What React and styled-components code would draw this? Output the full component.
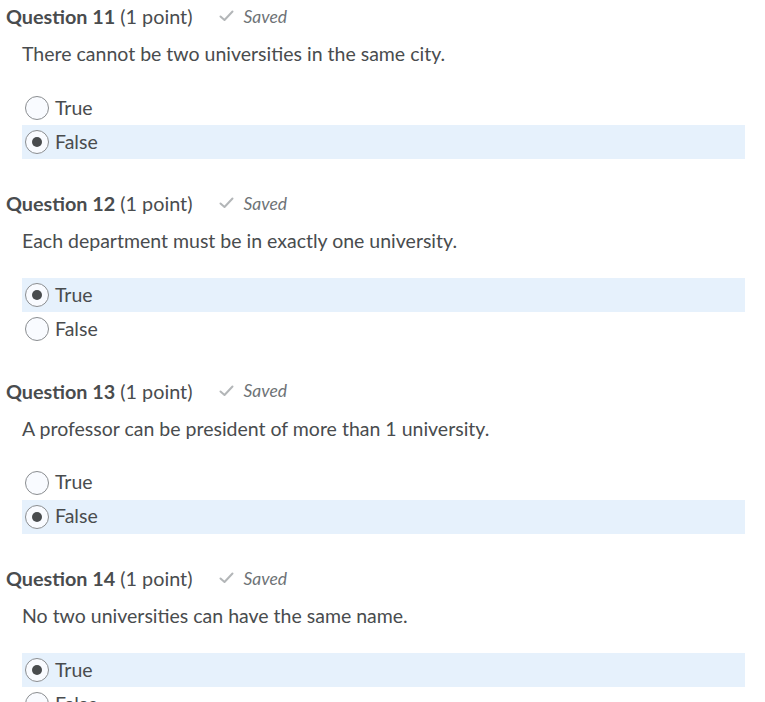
import React from 'react';
import styled, { createGlobalStyle } from 'styled-components';

const GlobalStyle = createGlobalStyle`
    body {
        margin: 0;
        background: #fff;
        font-family: Lato, "Noto Sans", sans-serif;
        color: #494c4e;
    }
`;

const Page = styled.div`
    padding: 4px 20px 0 6px;
`;

const Question = styled.section`
    margin-bottom: 32.35px;
`;

const TitleRow = styled.div`
    display: flex;
    align-items: center;
    height: 24px;
    font-size: 19.8px;
`;

const Number = styled.span`
    font-weight: 700;
`;

const Points = styled.span`
    margin-left: 5px;
`;

const Saved = styled.span`
    display: flex;
    align-items: center;
    margin-left: 27px;
    font-size: 17.5px;
    font-style: italic;
    color: #6e7376;
    svg {
        margin-right: 9px;
    }
`;

const Prompt = styled.p`
    margin: 14px 0 25px 16px;
    font-size: 19.5px;
    line-height: 24px;
`;

const Options = styled.div`
    margin-left: 16px;
`;

const Option = styled.label`
    box-sizing: border-box;
    display: flex;
    align-items: center;
    height: 34px;
    padding: 0 0 2px 3px;
    font-size: 19.5px;
    background: ${(p) => (p.checked ? '#e6f1fc' : 'transparent')};
`;

const Radio = styled.span`
    box-sizing: border-box;
    width: 24px;
    height: 24px;
    margin: 2px 6px 0 0;
    border-radius: 50%;
    border: 1px solid #8a8d90;
    background: #f9fbff;
    display: flex;
    align-items: center;
    justify-content: center;
    &::after {
        content: '';
        display: ${(p) => (p.checked ? 'block' : 'none')};
        width: 10px;
        height: 10px;
        border-radius: 50%;
        background: #494c4e;
    }
`;

const Check = () => (
    <svg width="15" height="12" viewBox="0 0 15 12">
        <path d="M1.5 6.5 L5.5 10 L13.5 1.5" fill="none" stroke="#b3b6b8" strokeWidth="2" strokeLinecap="round" strokeLinejoin="round" />
    </svg>
);

const questions = [
    { n: 11, text: 'There cannot be two universities in the same city.', answer: 'False' },
    { n: 12, text: 'Each department must be in exactly one university.', answer: 'True' },
    { n: 13, text: 'A professor can be president of more than 1 university.', answer: 'False' },
    { n: 14, text: 'No two universities can have the same name.', answer: 'True' },
];

const App = () => (
    <Page>
        <GlobalStyle />
        {questions.map((q) => (
            <Question key={q.n}>
                <TitleRow>
                    <Number>Question {q.n}</Number>
                    <Points>(1 point)</Points>
                    <Saved>
                        <Check />
                        Saved
                    </Saved>
                </TitleRow>
                <Prompt>{q.text}</Prompt>
                <Options>
                    {['True', 'False'].map((opt) => (
                        <Option key={opt} checked={q.answer === opt}>
                            <Radio checked={q.answer === opt} />
                            {opt}
                        </Option>
                    ))}
                </Options>
            </Question>
        ))}
    </Page>
);

export default App;
